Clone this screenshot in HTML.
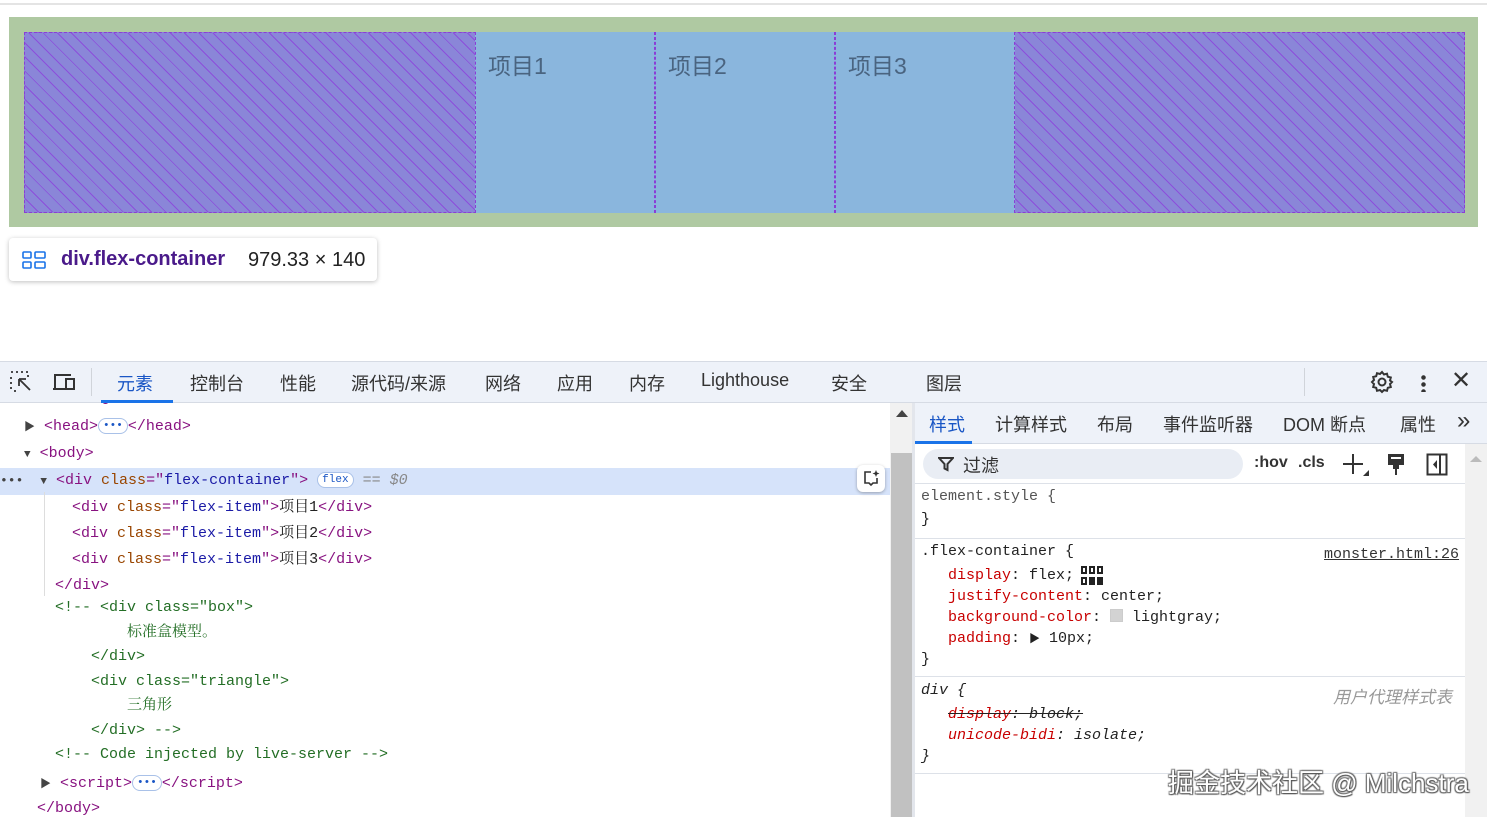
<!DOCTYPE html>
<html><head><meta charset="utf-8"><style>
*{margin:0;padding:0;box-sizing:border-box}
body{width:1487px;height:817px;overflow:hidden;background:#fff;position:relative;font-family:"Liberation Sans","Noto Sans CJK SC",sans-serif}
.a{position:absolute;white-space:nowrap}
.code{font-family:"Liberation Mono","Noto Serif CJK SC",monospace;font-size:15px;line-height:26px}
.tg{color:#881280}.at{color:#994500}.av{color:#1a1aa6}.cm{color:#236e25}.tx{color:#222}
.tb{font-size:18px;color:#333}
.pr{color:#c80000}
.css{font-family:"Liberation Mono","Noto Serif CJK SC",monospace;font-size:15px;color:#222}
.item{position:absolute;top:32px;width:180px;height:181px;background:#8ab6dd;border-left:1px dashed #8b3dd6;border-right:1px dashed #8b3dd6}
.item span{position:absolute;left:12px;top:15px;font-size:23px;color:#4a6480}
.pill{display:inline-block;border:1px solid #a9c1e8;border-radius:9px;color:#1a56c5;font-size:11px;line-height:14px;padding:0 4px;vertical-align:middle;background:#fff}
</style></head><body>
<div class="a" style="left:0;top:3px;width:1487px;height:2px;background:#e4e4e4"></div>
<div class="a" style="left:9px;top:17px;width:1469px;height:210px;background:#afc9a2"></div>
<div class="a" style="left:24px;top:32px;width:1441px;height:181px;border:1px dashed #8b3dd6;background-color:#8a86d8;background-image:repeating-linear-gradient(45deg,transparent 0 9px,rgba(140,60,220,.75) 9px 10px)"></div>
<div class="item" style="left:475px"><span>项目1</span></div>
<div class="item" style="left:655px"><span>项目2</span></div>
<div class="item" style="left:835px"><span>项目3</span></div>
<div class="a" style="left:9px;top:238px;width:368px;height:43px;background:#fff;border-radius:4px;box-shadow:0 1px 5px rgba(0,0,0,.25)"></div>
<div class="a" style="left:22px;top:251px;width:24px;height:18px">
<svg width="24" height="18"><g fill="none" stroke="#1a73e8" stroke-width="1.6"><rect x="1" y="1" width="8" height="6" rx="1"/><rect x="13" y="1" width="10" height="6" rx="1"/><rect x="1" y="11" width="8" height="6" rx="1"/><rect x="13" y="11" width="10" height="6" rx="1"/></g></svg></div>
<div class="a" style="left:61px;top:248px;font-size:20px;font-weight:bold;color:#4a1a8a">div.flex-container</div>
<div class="a" style="left:248px;top:249px;font-size:20px;color:#222">979.33 × 140</div>

<!-- devtools toolbar -->
<div class="a" style="left:0;top:361px;width:1487px;height:42px;background:#eef2f9;border-top:1px solid #d6dbe4;border-bottom:1px solid #d6dbe4"></div>
<svg class="a" style="left:10px;top:371px" width="24" height="22"><g fill="none" stroke="#333" stroke-width="1.8"><path d="M1 1h2M6 1h2M11 1h2M16 1h2M1 6v2M1 11v2M1 16v2M4 20h2M18 4v2"/><path d="M9 8l11 11M9 8h7M9 8v7"/></g></svg>
<svg class="a" style="left:52px;top:372px" width="24" height="20"><g fill="none" stroke="#333" stroke-width="2"><path d="M3 16V3h16M1 17h12"/><rect x="14" y="7" width="8" height="10"/></g></svg>
<div class="a" style="left:91px;top:368px;width:1px;height:28px;background:#d0d4da"></div>
<div class="a tb" style="left:117px;top:370px;color:#1a56c5">元素</div>
<div class="a" style="left:101px;top:400px;width:72px;height:3px;background:#1a73e8"></div>
<div class="a tb" style="left:190px;top:370px">控制台</div>
<div class="a tb" style="left:280px;top:370px">性能</div>
<div class="a tb" style="left:351px;top:370px">源代码/来源</div>
<div class="a tb" style="left:485px;top:370px">网络</div>
<div class="a tb" style="left:557px;top:370px">应用</div>
<div class="a tb" style="left:629px;top:370px">内存</div>
<div class="a tb" style="left:701px;top:370px">Lighthouse</div>
<div class="a tb" style="left:831px;top:370px">安全</div>
<div class="a tb" style="left:926px;top:370px">图层</div>
<div class="a" style="left:1304px;top:368px;width:1px;height:28px;background:#d0d4da"></div>
<svg class="a" style="left:1370px;top:370px" width="24" height="24" viewBox="0 0 24 24"><path fill="none" stroke="#333" stroke-width="2" d="M12 2l2 2.5 3-.8.8 3 3 .8-.8 3L22 12l-2 2 .8 3-3 .8-.8 3-3-.8L12 22l-2-2-3 .8-.8-3-3-.8.8-3L2 12l2-2-.8-3 3-.8.8-3 3 .8z"/><circle cx="12" cy="12" r="3.5" fill="none" stroke="#333" stroke-width="2"/></svg>
<div class="a" style="left:1421px;top:374px;width:5px;height:18px;background:radial-gradient(circle,#333 2px,transparent 2.5px) 0 0/5px 7px repeat-y"></div>
<div class="a" style="left:1451px;top:366px;font-size:24px;color:#333">✕</div>

<!-- elements panel -->
<div class="a" style="left:20px;top:403px;width:200px;height:8px;overflow:hidden"><div class="a code tg" style="left:0;top:-18px">&lt;html lang="en"&gt;</div></div>
<div class="a code" style="left:0;top:414px;width:890px">
<div style="padding-left:24px"><span style="font-size:11px;color:#444">▶</span> <span class="tg">&lt;head&gt;</span><span class="pill">•••</span><span class="tg">&lt;/head&gt;</span></div>
<div style="padding-left:24px"><span style="font-size:11px;color:#444">▼</span> <span class="tg">&lt;body&gt;</span></div>
<div style="padding-left:0;background:#d6e3fa;position:relative"><span style="color:#444;font-size:13px">•••</span><span style="padding-left:17px;font-size:11px;color:#444">▼</span> <span class="tg">&lt;div </span><span class="at">class</span><span class="tg">="</span><span class="av">flex-container</span><span class="tg">"&gt;</span> <span class="pill">flex</span> <span style="color:#888;font-style:italic">== $0</span></div>
<div style="padding-left:72px"><span class="tg">&lt;div </span><span class="at">class</span><span class="tg">="</span><span class="av">flex-item</span><span class="tg">"&gt;</span><span class="tx">项目1</span><span class="tg">&lt;/div&gt;</span></div>
<div style="padding-left:72px"><span class="tg">&lt;div </span><span class="at">class</span><span class="tg">="</span><span class="av">flex-item</span><span class="tg">"&gt;</span><span class="tx">项目2</span><span class="tg">&lt;/div&gt;</span></div>
<div style="padding-left:72px"><span class="tg">&lt;div </span><span class="at">class</span><span class="tg">="</span><span class="av">flex-item</span><span class="tg">"&gt;</span><span class="tx">项目3</span><span class="tg">&lt;/div&gt;</span></div>
<div style="padding-left:55px"><span class="tg">&lt;/div&gt;</span></div>
</div>
<div class="a" style="left:44px;top:492px;width:1px;height:104px;background:#ddd"></div>
<div class="a" style="left:857px;top:465px;width:28px;height:27px;background:#fff;border-radius:6px;box-shadow:0 1px 3px rgba(0,0,0,.3)"></div>
<svg class="a" style="left:862px;top:469px" width="18" height="18"><path fill="none" stroke="#333" stroke-width="1.6" d="M9 3H3v11h4l2 2 2-2h4V9"/><path fill="#333" d="M14 1l1 2.5 2.5 1-2.5 1-1 2.5-1-2.5-2.5-1 2.5-1z"/></svg>
<div class="a code cm" style="left:55px;top:596px;line-height:24.5px">
<div>&lt;!-- &lt;div class="box"&gt;</div>
<div style="padding-left:72px">标准盒模型。</div>
<div style="padding-left:36px">&lt;/div&gt;</div>
<div style="padding-left:36px">&lt;div class="triangle"&gt;</div>
<div style="padding-left:72px">三角形</div>
<div style="padding-left:36px">&lt;/div&gt; --&gt;</div>
<div>&lt;!-- Code injected by live-server --&gt;</div>
</div>
<div class="a code" style="left:40px;top:771px"><span style="font-size:11px;color:#444">▶</span> <span class="tg">&lt;script&gt;</span><span class="pill">•••</span><span class="tg">&lt;/script&gt;</span></div>
<div class="a code tg" style="left:37px;top:796px">&lt;/body&gt;</div>

<!-- scrollbar -->
<div class="a" style="left:890px;top:403px;width:23px;height:414px;background:#f1f1f1"></div>
<div class="a" style="left:891px;top:453px;width:21px;height:364px;background:#c1c1c1"></div>
<div class="a" style="left:896px;top:410px;width:0;height:0;border-left:6px solid transparent;border-right:6px solid transparent;border-bottom:7px solid #444"></div>
<div class="a" style="left:912px;top:403px;width:3px;height:414px;background:#e3e6ec"></div>

<!-- styles panel -->
<div class="a" style="left:915px;top:403px;width:572px;height:41px;background:#eef2f9;border-bottom:1px solid #d6dbe4"></div>
<div class="a tb" style="left:929px;top:411px;color:#1a56c5">样式</div>
<div class="a" style="left:915px;top:441px;width:57px;height:3px;background:#1a73e8"></div>
<div class="a tb" style="left:995px;top:411px">计算样式</div>
<div class="a tb" style="left:1097px;top:411px">布局</div>
<div class="a tb" style="left:1163px;top:411px">事件监听器</div>
<div class="a tb" style="left:1283px;top:411px">DOM 断点</div>
<div class="a tb" style="left:1400px;top:411px">属性</div>
<div class="a tb" style="left:1457px;top:407px;font-size:24px">»</div>
<div class="a" style="left:1465px;top:444px;width:22px;height:373px;background:#f1f1f1"></div>
<div class="a" style="left:1470px;top:456px;width:0;height:0;border-left:6px solid transparent;border-right:6px solid transparent;border-bottom:6px solid #bbb"></div>
<div class="a" style="left:923px;top:449px;width:320px;height:30px;border-radius:15px;background:#e9edf4"></div>
<svg class="a" style="left:938px;top:456px" width="16" height="16"><path fill="none" stroke="#333" stroke-width="2" d="M1 2h14l-5.5 6v6l-3-1.5V8z"/></svg>
<div class="a" style="left:963px;top:452px;font-size:18px;color:#333">过滤</div>
<div class="a" style="left:1254px;top:454px;font-size:16px;font-weight:bold;color:#333">:hov</div>
<div class="a" style="left:1298px;top:454px;font-size:16px;font-weight:bold;color:#333">.cls</div>
<svg class="a" style="left:1343px;top:452px" width="28" height="26"><path stroke="#333" stroke-width="2" d="M10 2v20M0 12h20"/><path fill="#333" d="M26 18v6h-6z"/></svg>
<svg class="a" style="left:1386px;top:453px" width="20" height="24"><path fill="#333" d="M2 1h16v11H2z"/><path fill="#fff" d="M5 4h10v2H5z"/><path fill="#333" d="M7 12h6v4h-2v6H9v-6H7z"/></svg>
<svg class="a" style="left:1426px;top:453px" width="22" height="24"><rect x="1.5" y="1.5" width="19" height="20" fill="none" stroke="#333" stroke-width="2"/><path stroke="#333" stroke-width="2" d="M14 2v19"/><path fill="#333" d="M11 7v9l-4-4.5z"/></svg>
<div class="a" style="left:915px;top:483px;width:550px;height:1px;background:#dde1e8"></div>
<div class="a css" style="left:921px;top:488px;color:#555">element.style {</div>
<div class="a css" style="left:921px;top:511px">}</div>
<div class="a" style="left:915px;top:538px;width:550px;height:1px;background:#dde1e8"></div>
<div class="a css" style="left:921px;top:543px">.flex-container {</div>
<div class="a css" style="left:1324px;top:546px;text-decoration:underline;color:#333">monster.html:26</div>
<div class="a css" style="left:948px;top:567px"><span class="pr">display</span>: flex;</div>
<svg class="a" style="left:1081px;top:566px" width="22" height="20"><g fill="#222"><rect x="0" y="0" width="6" height="8"/><rect x="8" y="0" width="6" height="8"/><rect x="16" y="0" width="6" height="8"/><rect x="0" y="11" width="6" height="8"/><rect x="8" y="11" width="6" height="8"/><rect x="16" y="11" width="6" height="8"/></g><g fill="#fff"><rect x="2" y="2" width="2" height="4"/><rect x="10" y="2" width="2" height="4"/><rect x="18" y="2" width="2" height="4"/><rect x="2" y="13" width="2" height="4"/></g></svg>
<div class="a css" style="left:948px;top:588px"><span class="pr">justify-content</span>: center;</div>
<div class="a css" style="left:948px;top:609px"><span class="pr">background-color</span>: <span style="display:inline-block;width:13px;height:13px;background:#d3d3d3;border:1px solid #ccc;vertical-align:-1px"></span> lightgray;</div>
<div class="a css" style="left:948px;top:630px"><span class="pr">padding</span>: <span style="font-size:11px">▶</span> 10px;</div>
<div class="a css" style="left:921px;top:651px">}</div>
<div class="a" style="left:915px;top:676px;width:550px;height:1px;background:#dde1e8"></div>
<div class="a css" style="left:921px;top:682px;font-style:italic">div {</div>
<div class="a" style="left:1333px;top:683px;font-size:17px;font-style:italic;color:#999">用户代理样式表</div>
<div class="a css" style="left:948px;top:706px;font-style:italic;text-decoration:line-through"><span class="pr">display</span>: block;</div>
<div class="a css" style="left:948px;top:727px;font-style:italic"><span class="pr">unicode-bidi</span>: isolate;</div>
<div class="a css" style="left:921px;top:748px;font-style:italic">}</div>
<div class="a" style="left:915px;top:773px;width:550px;height:1px;background:#dde1e8"></div>
<div class="a" style="left:1168px;top:763px;font-size:26px;color:#fff;text-shadow:1px 1px 1px #555,-1px -1px 1px #777,1px -1px 1px #666,-1px 1px 1px #666">掘金技术社区 @ Milchstra</div>
</body></html>
